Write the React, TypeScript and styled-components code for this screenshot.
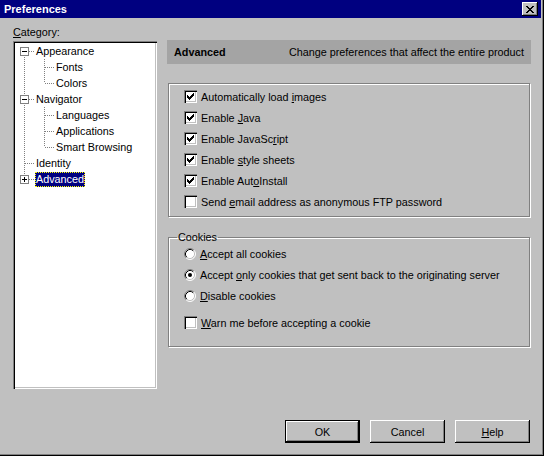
import { FC, ReactNode } from 'react';
import styled, { createGlobalStyle } from 'styled-components';

const Global = createGlobalStyle`
  html, body {
    margin: 0;
    padding: 0;
    background: #c0c0c0;
  }
  body {
    font-family: 'Liberation Sans', Arial, sans-serif;
    font-size: 10.8px;
    color: #000;
  }
`;

const raised = `
  background: #c0c0c0;
  box-shadow: inset -1px -1px #000, inset 1px 1px #fff, inset -2px -2px #808080;
`;

const sunken = `
  background: #fff;
  box-shadow: inset 1px 1px #808080, inset 2px 2px #000, inset -1px -1px #fff,
    inset -2px -2px #c0c0c0;
`;

const Window = styled.div`
  width: 544px;
  height: 456px;
  box-sizing: border-box;
  display: flex;
  flex-direction: column;
  background: #c0c0c0;
  box-shadow: inset -1px -1px #000, inset -2px -2px #808080;
`;

const TitleBar = styled.div`
  height: 18px;
  margin-right: 3px;
  padding: 0 3px 0 4px;
  display: flex;
  align-items: center;
  justify-content: space-between;
  background: #000080;
  color: #fff;
  font-weight: bold;
  font-size: 11px;
`;

const CloseButton = styled.div`
  width: 16px;
  height: 14px;
  display: flex;
  align-items: center;
  justify-content: center;
  ${raised}
`;

const Body = styled.div`
  display: flex;
  gap: 10px;
  padding: 0 13px;
`;

const LeftColumn = styled.div`
  width: 144px;
  display: flex;
  flex-direction: column;
  padding-top: 8px;
`;

const Caption = styled.div`
  height: 13px;
  line-height: 13px;
  margin-bottom: 2px;
`;

const Tree = styled.div`
  height: 348px;
  box-sizing: border-box;
  padding: 2px;
  ${sunken}
`;

const TreeRow = styled.div`
  height: 16px;
  display: flex;
  align-items: center;
`;

const TreeLines = styled.svg`
  flex: none;
`;

const TreeLabel = styled.span<{ $selected?: boolean }>`
  margin-left: 1px;
  padding: 0 1px;
  height: 15px;
  line-height: 15px;
  white-space: nowrap;
  background: ${(p) => (p.$selected ? '#000080' : 'transparent')};
  color: ${(p) => (p.$selected ? '#fff' : '#000')};
  outline: ${(p) => (p.$selected ? '1px dotted #ff0' : 'none')};
  outline-offset: -1px;
`;

const RightColumn = styled.div`
  flex: 1;
  display: flex;
  flex-direction: column;
  padding-top: 22px;
`;

const Header = styled.div`
  height: 24px;
  padding: 0 7px;
  display: flex;
  align-items: center;
  justify-content: space-between;
  background: #a4a4a4;
`;

const HeaderTitle = styled.span`
  font-weight: bold;
`;

const Group = styled.div`
  margin: 19px 1px 0 1px;
  padding: 2px 0 4px 15px;
  border: 1px solid #808080;
  box-shadow: 1px 1px 0 #fff, inset 1px 1px 0 #fff;
`;

const Fieldset = styled.fieldset`
  margin: 14px 1px 0 1px;
  padding: 0 0 13px 15px;
  min-width: 0;
  border: 1px solid #808080;
  box-shadow: 1px 1px 0 #fff, inset 1px 1px 0 #fff;
`;

const Legend = styled.legend`
  margin-left: -7px;
  margin-bottom: -1px;
  padding: 0 1px;
  line-height: 13px;
`;

const Option = styled.label<{ $gap?: number }>`
  height: 21px;
  margin-top: ${(p) => p.$gap ?? 0}px;
  display: flex;
  align-items: center;
  gap: 4px;
  white-space: nowrap;
`;

const CheckBox = styled.span`
  width: 13px;
  height: 13px;
  box-sizing: border-box;
  flex: none;
  display: flex;
  ${sunken}
`;

const RadioDot = styled.svg`
  flex: none;
`;

const Key = styled.u`
  text-decoration: underline;
  text-underline-offset: 1px;
`;

const Footer = styled.div`
  margin-top: auto;
  padding: 0 14px 13px 0;
  display: flex;
  justify-content: flex-end;
  gap: 10px;
`;

const Button = styled.div<{ $default?: boolean }>`
  width: 75px;
  height: 23px;
  box-sizing: border-box;
  display: flex;
  align-items: center;
  justify-content: center;
  ${(p) =>
    p.$default
      ? `background: #c0c0c0;
         box-shadow: inset 0 0 0 1px #000, inset -2px -2px #000, inset 2px 2px #fff, inset -3px -3px #808080;`
      : raised}
`;

const CheckMark = () => (
  <svg width="13" height="13" viewBox="0 0 13 13" shapeRendering="crispEdges">
    <path
      fill="#000"
      d="M9 3h1v1h-1zM8 4h2v1h-2zM3 5h1v1h-1zM7 5h3v1h-3zM3 6h2v1h-2zM6 6h3v1h-3zM3 7h5v1h-5zM4 8h3v1h-3zM5 9h1v1h-1z"
    />
  </svg>
);

const Check: FC<{ checked?: boolean; children: ReactNode; gap?: number }> = ({
  checked,
  children,
  gap,
}) => (
  <Option $gap={gap}>
    <CheckBox>{checked && <CheckMark />}</CheckBox>
    <span>{children}</span>
  </Option>
);

const Radio: FC<{ checked?: boolean; children: ReactNode }> = ({
  checked,
  children,
}) => (
  <Option>
    <RadioDot width="12" height="12" viewBox="0 0 12 12">
      <circle cx="6" cy="6" r="5" fill="#fff" />
      <path d="M2.11 9.89A5.5 5.5 0 0 1 9.89 2.11" fill="none" stroke="#808080" />
      <path d="M9.89 2.11A5.5 5.5 0 0 1 2.11 9.89" fill="none" stroke="#fff" />
      <path d="M2.82 9.18A4.5 4.5 0 0 1 9.18 2.82" fill="none" stroke="#000" />
      <path d="M9.18 2.82A4.5 4.5 0 0 1 2.82 9.18" fill="none" stroke="#c0c0c0" />
      {checked && <circle cx="6" cy="6" r="2" fill="#000" />}
    </RadioDot>
    <span>{children}</span>
  </Option>
);

type Node = {
  label: string;
  level: number;
  toggle?: 'minus' | 'plus';
  first?: boolean;
  last?: boolean;
  rails?: boolean[];
  selected?: boolean;
};

const nodes: Node[] = [
  { label: 'Appearance', level: 0, toggle: 'minus', first: true },
  { label: 'Fonts', level: 1, rails: [true] },
  { label: 'Colors', level: 1, last: true, rails: [true] },
  { label: 'Navigator', level: 0, toggle: 'minus' },
  { label: 'Languages', level: 1, rails: [true] },
  { label: 'Applications', level: 1, rails: [true] },
  { label: 'Smart Browsing', level: 1, last: true, rails: [true] },
  { label: 'Identity', level: 0 },
  { label: 'Advanced', level: 0, toggle: 'plus', last: true, selected: true },
];

const dots = { stroke: '#808080', strokeDasharray: '1 1' };

// dotted connector lines and the +/- box for one tree row
const Connector: FC<{ node: Node }> = ({ node }) => {
  const width = 19 + node.level * 20;
  const cx = 9 + node.level * 20 + 0.5;
  return (
    <TreeLines width={width} height="16" shapeRendering="crispEdges">
      {(node.rails ?? []).map((on, i) =>
        on ? <line key={i} x1={9.5 + i * 20} y1="0" x2={9.5 + i * 20} y2="16" {...dots} /> : null
      )}
      <line x1={cx} y1={node.first ? 8 : 0} x2={cx} y2={node.last ? 8 : 16} {...dots} />
      <line x1={cx} y1="8.5" x2={width} y2="8.5" {...dots} />
      {node.toggle && (
        <>
          <rect x={cx - 4} y="4.5" width="8" height="8" fill="#fff" stroke="#808080" />
          <line x1={cx - 2.5} y1="8.5" x2={cx + 2.5} y2="8.5" stroke="#000" />
          {node.toggle === 'plus' && <line x1={cx} y1="6" x2={cx} y2="11" stroke="#000" />}
        </>
      )}
    </TreeLines>
  );
};

export default function App() {
  return (
    <>
      <Global />
      <Window>
        <TitleBar>
          <span>Preferences</span>
          <CloseButton>
            <svg width="8" height="7" viewBox="0 0 8 7" shapeRendering="crispEdges">
              <path
                fill="#000"
                d="M0 0h2v1h-2zM6 0h2v1h-2zM1 1h2v1h-2zM5 1h2v1h-2zM2 2h4v1h-4zM3 3h2v1h-2zM2 4h4v1h-4zM1 5h2v1h-2zM5 5h2v1h-2zM0 6h2v1h-2zM6 6h2v1h-2z"
              />
            </svg>
          </CloseButton>
        </TitleBar>

        <Body>
          <LeftColumn>
            <Caption>
              <Key>C</Key>ategory:
            </Caption>
            <Tree>
              {nodes.map((n) => (
                <TreeRow key={n.label}>
                  <Connector node={n} />
                  <TreeLabel $selected={n.selected}>{n.label}</TreeLabel>
                </TreeRow>
              ))}
            </Tree>
          </LeftColumn>

          <RightColumn>
            <Header>
              <HeaderTitle>Advanced</HeaderTitle>
              <span>Change preferences that affect the entire product</span>
            </Header>

            <Group>
              <Check checked>
                Automatically load <Key>i</Key>mages
              </Check>
              <Check checked>
                Enable <Key>J</Key>ava
              </Check>
              <Check checked>
                Enable JavaSc<Key>r</Key>ipt
              </Check>
              <Check checked>
                Enable <Key>s</Key>tyle sheets
              </Check>
              <Check checked>
                Enable Aut<Key>o</Key>Install
              </Check>
              <Check>
                Send <Key>e</Key>mail address as anonymous FTP password
              </Check>
            </Group>

            <Fieldset>
              <Legend>Cookies</Legend>
              <Radio>
                <Key>A</Key>ccept all cookies
              </Radio>
              <Radio checked>
                Accept <Key>o</Key>nly cookies that get sent back to the originating server
              </Radio>
              <Radio>
                <Key>D</Key>isable cookies
              </Radio>
              <Check gap={6}>
                <Key>W</Key>arn me before accepting a cookie
              </Check>
            </Fieldset>
          </RightColumn>
        </Body>

        <Footer>
          <Button $default>OK</Button>
          <Button>Cancel</Button>
          <Button>
            <Key>H</Key>elp
          </Button>
        </Footer>
      </Window>
    </>
  );
}
